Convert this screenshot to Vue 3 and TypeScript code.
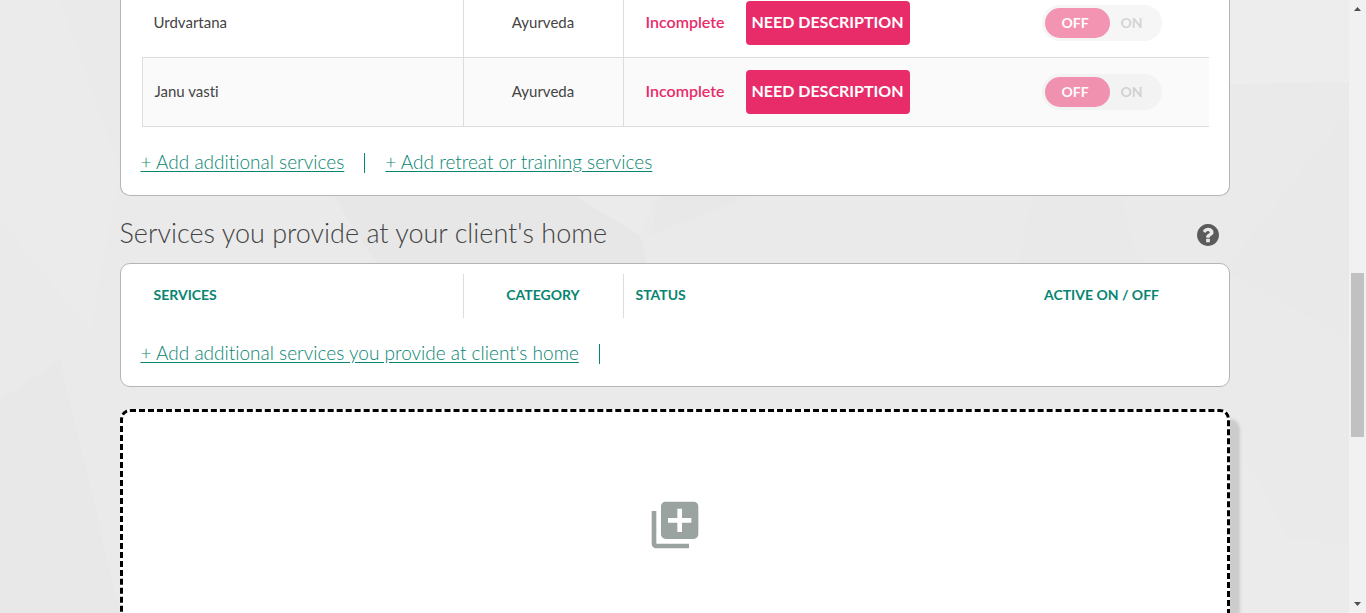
<script setup lang="ts">
import { reactive } from 'vue'

interface Service {
  id: string
  name: string
  category: string
  status: string
  action: string
  active: boolean
}

const services = reactive<Service[]>([
  { id: 'urdvartana', name: 'Urdvartana', category: 'Ayurveda', status: 'Incomplete', action: 'NEED DESCRIPTION', active: false },
  { id: 'janu-vasti', name: 'Janu vasti', category: 'Ayurveda', status: 'Incomplete', action: 'NEED DESCRIPTION', active: false },
])
</script>

<template>
  <div class="window">
    <main class="page">
      <svg class="facets" viewBox="0 0 1349 613" preserveAspectRatio="xMidYMid slice" aria-hidden="true">
        <polygon points="0,0 60,0 120,170 90,330 0,220" fill="#ebebeb" />
        <polygon points="0,400 60,360 120,613 0,613" fill="#e8e8e8" />
        <polygon points="330,190 565,190 640,235 648,270 380,270" fill="#e7e7e7" />
        <polygon points="565,190 655,190 640,235" fill="#ebebeb" />
        <polygon points="660,190 765,190 650,235" fill="#e8e8e8" />
        <polygon points="1033,190 1120,190 1140,270 1018,270" fill="#e9e9e9" />
        <polygon points="1225,0 1349,0 1349,82 1225,84" fill="#ededed" />
        <polygon points="1349,110 1349,340 1225,270" fill="#e9e9e9" />
        <polygon points="1240,450 1290,540 1349,543 1349,613 1240,613" fill="#ebebeb" />
      </svg>

      <div class="container">
        <section class="card card-continued">
          <table class="services">
            <colgroup>
              <col class="col-name" />
              <col class="col-category" />
              <col />
              <col class="col-active" />
            </colgroup>
            <tbody>
              <tr v-for="service in services" :key="service.id">
                <td>{{ service.name }}</td>
                <td class="category">{{ service.category }}</td>
                <td class="status">
                  <div class="status-line">
                    <span class="state">{{ service.status }}</span>
                    <button type="button" class="need">{{ service.action }}</button>
                  </div>
                </td>
                <td class="active">
                  <label class="toggle">
                    <input v-model="service.active" type="checkbox" :aria-label="`${service.name} active`" />
                    <span class="off">OFF</span>
                    <span class="on">ON</span>
                  </label>
                </td>
              </tr>
            </tbody>
          </table>
          <div class="links">
            <a href="#add-services">+ Add additional services</a>
            <span class="bar"></span>
            <a href="#add-retreat">+ Add retreat or training services</a>
          </div>
        </section>

        <header class="heading">
          <h2>Services you provide at your client's home</h2>
          <button type="button" class="help" aria-label="Help">
            <svg viewBox="128 128 1536 1536" width="22" height="22" aria-hidden="true">
              <path
                fill="#5b5b5b"
                d="M1024 1376v-192q0-14-9-23t-23-9h-192q-14 0-23 9t-9 23v192q0 14 9 23t23 9h192q14 0 23-9t9-23zm256-672q0-88-55.5-163t-138.5-116-170-41q-243 0-371 213-15 24 8 42l132 100q7 6 19 6 16 0 25-12 53-68 86-92 34-24 86-24 48 0 85.5 26t37.5 59q0 38-20 61t-68 45q-63 28-115.5 86.5t-52.5 125.5v36q0 14 9 23t23 9h192q14 0 23-9t9-23q0-19 21.5-49.5t54.5-49.5q32-18 49-28.5t46-35 44.5-48 28-60.5 12.5-81zm384 192q0 209-103 385.5t-279.5 279.5-385.5 103-385.5-103-279.5-279.5-103-385.5 103-385.5 279.5-279.5 385.5-103 385.5 103 279.5 279.5 103 385.5z"
              />
            </svg>
          </button>
        </header>

        <section class="card card-home">
          <table class="services">
            <colgroup>
              <col class="col-name" />
              <col class="col-category" />
              <col />
              <col class="col-active" />
            </colgroup>
            <thead>
              <tr>
                <th scope="col">SERVICES</th>
                <th scope="col" class="category">CATEGORY</th>
                <th scope="col" class="status-head">STATUS</th>
                <th scope="col" class="active">ACTIVE ON / OFF</th>
              </tr>
            </thead>
          </table>
          <div class="links">
            <a href="#add-home-services">+ Add additional services you provide at client's home</a>
            <span class="bar"></span>
          </div>
        </section>

        <button type="button" class="dropzone" aria-label="Add new">
          <svg viewBox="0 0 24 24" width="56" height="56" aria-hidden="true">
            <path
              fill="#9ba3a0"
              d="M4 6H2v14c0 1.100.9 2 2 2h14v-2H4V6zm16-4H8c-1.100 0-2 .9-2 2v12c0 1.100.9 2 2 2h12c1.100 0 2-.9 2-2V4c0-1.100-.9-2-2-2zm-1 9h-4v4h-2v-4H9V9h4V5h2v4h4v2z"
            />
          </svg>
        </button>
      </div>
    </main>

    <div class="scrollbar" aria-hidden="true">
      <svg width="17" height="17" viewBox="0 0 17 17"><path d="M5 11h7L8.500 7z" fill="#505050" /></svg>
      <div class="track"><div class="thumb"></div></div>
      <svg width="17" height="17" viewBox="0 0 17 17"><path d="M5 6h7L8.500 10z" fill="#505050" /></svg>
    </div>
  </div>
</template>

<style>
body {
  margin: 0;
}
</style>

<style scoped>
.window {
  display: flex;
  height: 100vh;
  overflow: hidden;
  font-family: Lato, "Open Sans", sans-serif;
  font-variant-ligatures: none;
  color: #444;
}

.page {
  position: relative;
  flex: 1;
  min-width: 0;
  overflow: hidden;
  background: #eaeaea;
}

.facets {
  position: absolute;
  inset: 0;
  width: 100%;
  height: 100%;
}

.container {
  position: relative;
  box-sizing: border-box;
  max-width: 1110px;
  margin: 0 auto;
}

.card {
  padding: 10px 20px 22px;
  border: 1px solid #b5b5b5;
  border-radius: 10px;
  background: #fff;
}

.card-continued {
  padding-top: 0;
  border-top: 0;
  border-radius: 0 0 10px 10px;
}

.services {
  width: calc(100% - 1px);
  margin-left: 1px;
  table-layout: fixed;
  border-spacing: 0;
  font-size: 15px;
}

.col-name {
  width: 321px;
}

.col-category {
  width: 161px;
}

.col-active {
  width: 214px;
}

.services td {
  padding: 12px 12px 15px;
  border-bottom: 1px solid #ddd;
  line-height: 20px;
}

.services tr:first-child td {
  padding-top: 0;
  padding-bottom: 14px;
}

.services tr:nth-child(even) td {
  background: #fafafa;
}

.services tr:nth-child(even) td:first-child {
  border-left: 1px solid #ddd;
}

.services th {
  height: 41px;
  padding: 0 12px 3px;
  font-size: 14px;
  font-weight: 700;
  text-align: left;
  color: #078571;
}

.services .category {
  border-left: 1px solid #ddd;
  border-right: 1px solid #ddd;
  padding-left: 0;
  padding-right: 0;
  text-align: center;
}

.services .status {
  padding-left: 22px;
  padding-right: 0;
}

.services .active {
  padding-left: 0;
  padding-right: 0;
  text-align: center;
}

.services td.status,
.services td.active {
  padding-top: 12px;
  padding-bottom: 12px;
}

.services tr:first-child td.status,
.services tr:first-child td.active {
  padding-top: 1px;
  padding-bottom: 12px;
}

.status-line {
  display: flex;
  align-items: center;
}

.state {
  width: 100px;
  padding-bottom: 3px;
  font-size: 16px;
  font-weight: 600;
  color: #e82b69;
}

.need {
  width: 164px;
  height: 44px;
  padding: 0 0 3px;
  border: 0;
  border-radius: 4px;
  background: #e82b69;
  color: #fff;
  font-family: inherit;
  font-size: 16px;
  font-weight: 700;
  white-space: nowrap;
  cursor: pointer;
}

.toggle {
  position: relative;
  display: inline-flex;
  box-sizing: border-box;
  width: 120px;
  height: 36px;
  padding: 3px;
  border-radius: 18px;
  background: #eee;
  opacity: 0.5;
  font-size: 14px;
  font-weight: 700;
  line-height: 30px;
  vertical-align: middle;
  cursor: pointer;
}

.toggle input {
  position: absolute;
  inset: 0;
  width: 100%;
  height: 100%;
  margin: 0;
  opacity: 0;
}

.off {
  box-sizing: border-box;
  width: 65px;
  padding-right: 4px;
  border-radius: 15px;
  background: #e82b69;
  color: #fff;
}

.on {
  width: 44px;
  color: #aaa;
}

.links {
  display: flex;
  gap: 20px;
  height: 20px;
  margin-top: 26px;
}

.links a {
  color: #078571;
  font-size: 19px;
  font-weight: 300;
  line-height: 18px;
  text-decoration: underline;
  text-underline-offset: 2px;
  white-space: nowrap;
}

.bar {
  width: 1px;
  height: 20px;
  background: #078571;
}

.heading {
  display: flex;
  align-items: center;
  justify-content: space-between;
  box-sizing: border-box;
  height: 67px;
  padding: 11px 11px 0 0;
}

.heading h2 {
  margin: 0;
  padding-bottom: 4px;
  font-size: 27px;
  font-weight: 300;
  line-height: 32px;
}

.help {
  display: flex;
  padding: 0;
  border: 0;
  background: none;
  cursor: pointer;
}

.dropzone {
  display: flex;
  align-items: center;
  justify-content: center;
  box-sizing: border-box;
  width: 100%;
  height: 232px;
  margin-top: 22px;
  border: 3px dashed #000;
  border-radius: 10px;
  background: #fff;
  box-shadow: 10px 10px 3px #ccc;
  cursor: pointer;
}

.scrollbar {
  display: flex;
  flex-direction: column;
  flex: none;
  width: 17px;
  background: #f1f1f1;
}

.track {
  display: grid;
  grid-template-rows: 256fr 164fr 159fr;
  flex: 1;
  padding: 0 2px;
}

.thumb {
  grid-row: 2;
  background: #c1c1c1;
}
</style>
